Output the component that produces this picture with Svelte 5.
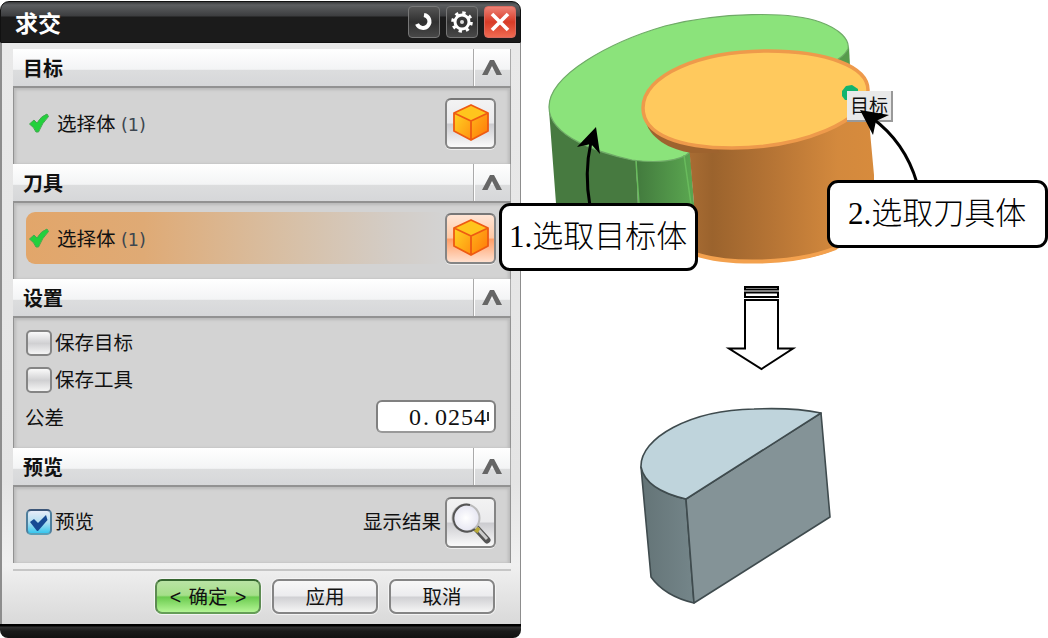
<script lang="ts">
  let keepTarget = $state(false);
  let keepTool = $state(false);
  let preview = $state(true);
  let closed = $state<Record<string, boolean>>({});

  function toggle(name: string) {
    closed[name] = !closed[name];
  }
</script>

{#snippet header(title: string)}
  <header class="section-head">
    <h2>{title}</h2>
    <button class="fold" aria-label={title} onclick={() => toggle(title)}>
      <svg width="20" height="15" viewBox="0 0 20 15">
        <path d="M0 15 L8 0 H12 L20 15 H14.500 L10 6 L5.500 15 Z" fill="#666" />
      </svg>
    </button>
  </header>
{/snippet}

{#snippet cube()}
  <svg width="38" height="38" viewBox="0 0 38 38">
    <path d="M2 9 L19 1 L36 9 V27 L19 36 L2 27 Z" fill="#ff9d12" />
    <path d="M2 9 L19 1 L36 9 L19 17 Z" fill="#ffc51d" />
    <path d="M2 9 L19 17 V36 L2 27 Z" fill="url(#cube-left)" />
    <path d="M36 9 L19 17 V36 L36 27 Z" fill="url(#cube-right)" />
    <path d="M2 9 L19 1 L36 9 V27 L19 36 L2 27 Z M2 9 L19 17 L36 9 M19 17 V36" fill="none" stroke="#ee5a12" stroke-width="1.8" stroke-linejoin="round" />
  </svg>
{/snippet}

{#snippet tick()}
  <svg class="tick" width="20" height="20" viewBox="0 0 20 20">
    <path d="M0.500 11 L5 7 L8 10 Q12 3 18 1 L19.500 3.500 Q13 10 9.500 19 H7 Q5 14 0.500 11 Z" fill="#22d13c" stroke="#45a850" stroke-width="1" />
  </svg>
{/snippet}

<main class="page">
  <svg class="defs" width="0" height="0">
    <defs>
      <linearGradient id="cube-left" x1="0" y1="0" x2="1" y2="1">
        <stop offset="0" stop-color="#ffd323" />
        <stop offset="1" stop-color="#ff9210" />
      </linearGradient>
      <linearGradient id="cube-right" x1="0" y1="0" x2="1" y2="1">
        <stop offset="0" stop-color="#ffb61a" />
        <stop offset="1" stop-color="#ff7608" />
      </linearGradient>
    </defs>
  </svg>

  <section class="dialog">
    <div class="titlebar">
      <h1>求交</h1>
      <button class="tool" aria-label="重置">
        <svg width="30" height="30" viewBox="0 0 30 30">
          <path d="M15 8 A6.500 6.500 0 1 1 8 17" fill="none" stroke="#fff" stroke-width="4" />
        </svg>
      </button>
      <button class="tool" aria-label="选项">
        <svg width="30" height="30" viewBox="0 0 30 30">
          <circle cx="15" cy="15" r="9.300" fill="none" stroke="#fff" stroke-width="3" stroke-dasharray="3.300 4" />
          <circle cx="15" cy="15" r="7" fill="none" stroke="#fff" stroke-width="3" />
          <circle cx="15" cy="15" r="2" fill="#ddd" />
        </svg>
      </button>
      <button class="tool close" aria-label="关闭">
        <svg width="30" height="30" viewBox="0 0 30 30">
          <path d="M7 7 L23 23 M23 7 L7 23" stroke="#fff" stroke-width="3.600" />
        </svg>
      </button>
    </div>

    <div class="content">
      {@render header('目标')}
      {#if !closed['目标']}
        <div class="body pick">
          <div class="pick-row">
            {@render tick()}
            <span>选择体 <em>(1)</em></span>
          </div>
          <button class="square" aria-label="体">{@render cube()}</button>
        </div>
      {/if}

      {@render header('刀具')}
      {#if !closed['刀具']}
        <div class="body pick">
          <div class="pick-row active">
            {@render tick()}
            <span>选择体 <em>(1)</em></span>
          </div>
          <button class="square hot" aria-label="体">{@render cube()}</button>
        </div>
      {/if}

      {@render header('设置')}
      {#if !closed['设置']}
        <div class="body settings">
          <label><input type="checkbox" bind:checked={keepTarget} /><i class="box"></i>保存目标</label>
          <label><input type="checkbox" bind:checked={keepTool} /><i class="box"></i>保存工具</label>
          <div class="tolerance">
            <span>公差</span>
            <div class="field"><span>0</span><span class="point">.</span><span>0254</span><i class="more"></i></div>
          </div>
        </div>
      {/if}

      {@render header('预览')}
      {#if !closed['预览']}
        <div class="body preview">
          <label>
            <input type="checkbox" bind:checked={preview} />
            <i class="box" class:on={preview}>
              {#if preview}
                <svg width="22" height="22" viewBox="0 0 22 22">
                  <path d="M2 11 L6 8 L10 12 L18 4 L19.500 9 L10 20 H9 Z" fill="#164a94" />
                </svg>
              {/if}
            </i>预览
          </label>
          <span class="result">显示结果</span>
          <button class="square" aria-label="显示结果">
            <svg width="44" height="44" viewBox="0 0 44 44">
              <path d="M28 29 L38 40" stroke="#555" stroke-width="7" stroke-linecap="round" />
              <path d="M28 28 L38 39" stroke="#ccc" stroke-width="3" />
              <path d="M25 28 L30 31" stroke="#b8a936" stroke-width="5" />
              <circle cx="17" cy="18" r="13.5" fill="url(#lens)" stroke="#bbb" stroke-width="2" />
              <path d="M21 5 A13.5 13.5 0 1 0 26 29" fill="none" stroke="#555" stroke-width="2" />
              <defs>
                <radialGradient id="lens">
                  <stop offset="0" stop-color="#fff" />
                  <stop offset="1" stop-color="#e6e6f2" />
                </radialGradient>
              </defs>
            </svg>
          </button>
        </div>
      {/if}

      <footer>
        <button class="btn ok">&lt; 确定 &gt;</button>
        <button class="btn">应用</button>
        <button class="btn">取消</button>
      </footer>
    </div>
    <div class="base"></div>
  </section>

  <svg class="scene" width="527" height="638" viewBox="521 0 527 638">
    <defs>
      <linearGradient id="wood" gradientUnits="userSpaceOnUse" x1="690" y1="0" x2="874" y2="0">
        <stop offset="0" stop-color="#a86c33" />
        <stop offset="0.12" stop-color="#9b632d" />
        <stop offset="0.5" stop-color="#ba7736" />
        <stop offset="0.8" stop-color="#d3893d" />
        <stop offset="1" stop-color="#d78b3d" />
      </linearGradient>
      <linearGradient id="moss" gradientUnits="userSpaceOnUse" x1="635" y1="0" x2="692" y2="0">
        <stop offset="0" stop-color="#42793d" />
        <stop offset="1" stop-color="#5aa650" />
      </linearGradient>
      <linearGradient id="slate" gradientUnits="userSpaceOnUse" x1="642" y1="0" x2="693" y2="0">
        <stop offset="0" stop-color="#647477" />
        <stop offset="1" stop-color="#748589" />
      </linearGradient>
    </defs>

    <!-- target body -->
    <path d="M830 60 L849 47 L850 66 L840 70 Z" fill="#569c4c" />
    <path d="M549 110 C562 138 600 153 636 160 L639 230 H558 Z" fill="#477a40" />
    <path d="M636 155 L690 150 L696 230 H639 Z" fill="url(#moss)" />
    <path d="M549 107 C549 75 610 42 665 26 C720 12 790 11 820 22 C840 29 850 40 848 49 C842 60 830 65 800 70 L700 120 L690 152 C680 162 655 163 632 160 C600 153 549 137 549 107 Z" fill="#8be37b" stroke="#6faa67" stroke-width="1.2" />
    <path d="M636 161 L639 204 M684 155 L691 204" stroke="#69bb5d" stroke-width="1.5" fill="none" />

    <!-- tool body -->
    <path d="M689 145 L866 88 L874 175 V215 C860 250 810 262 760 262 C730 262 705 259 690 254 L694 204 Z" fill="url(#wood)" />
    <path d="M695 254 C725 264 790 266 836 248" fill="none" stroke="#f3a14e" stroke-width="4" />
    <path d="M645 118 C648 138 670 150 692 153 H720 L700 130 Z" fill="#9e632e" />
    <path d="M643 108 C643 75 700 51 768 51 C825 51 868 66 868 90 C868 121 801 148 732 148 C680 148 643 135 643 108 Z" fill="#ffc95d" stroke="#ee9a4b" stroke-width="3.5" />
    <path d="M842 91 L846 86 L852 85 L858 89 V100 H845 L842 96 Z" fill="#12b46f" />

    <!-- result body -->
    <g stroke="#3f4b4e" stroke-width="1.6" stroke-linejoin="round">
      <path d="M641 467 C646 482 662 494 686 499 L694 603 C677 599 661 591 651 577 Z" fill="url(#slate)" />
      <path d="M686 499 L821 413 L830 517 L694 603 Z" fill="#849397" />
      <path d="M641 467 C640 438 690 410 754 409 C778 408 802 409 821 413 L686 499 C660 493 644 482 641 467 Z" fill="#bfd4dc" />
    </g>

    <!-- step arrow -->
    <g fill="#fff" stroke="#000" stroke-width="2">
      <path d="M745 287 H778 V289.500 H745 Z M745 292.500 H778 V297 H745 Z" />
      <path d="M745 300 H778 V348.500 H793 L761.500 369 L729 348.500 H745 Z" />
    </g>
  </svg>

  <span class="tag">目标</span>

  <svg class="pointers" width="1048" height="638" viewBox="0 0 1048 638">
    <path d="M590 206 Q584 173 591 142" fill="none" stroke="#000" stroke-width="3" />
    <path d="M596 127 L600 154 L591 144 L577 147 Z" />
    <path d="M917 183 Q905 142 872 118" fill="none" stroke="#000" stroke-width="3" />
    <path d="M860 110 L889 115 L876 121 L873 135 Z" />
  </svg>
  <div class="callout first">1.选取目标体</div>
  <div class="callout second">2.选取刀具体</div>
</main>

<style>
  :global(body) {
    margin: 0;
    background: #fff;
  }

  .page {
    position: relative;
    display: grid;
    grid-template-columns: 521px 527px;
    width: 1048px;
    height: 638px;
    overflow: hidden;
    color: #111;
    font-family: "Liberation Sans", "Noto Sans CJK SC", sans-serif;
    font-size: 19.5px;
  }

  .page * {
    box-sizing: border-box;
  }

  .defs {
    position: absolute;
  }

  button {
    padding: 0;
    font: inherit;
    color: inherit;
  }

  svg {
    display: block;
  }

  .scene {
    grid-column: 2;
    grid-row: 1;
  }

  /* Dialog frame */
  .dialog {
    grid-column: 1;
    grid-row: 1;
    display: flex;
    flex-direction: column;
    height: 638px;
    padding-top: 1px;
  }

  .titlebar {
    display: flex;
    align-items: center;
    gap: 6px;
    height: 42px;
    padding: 0 4px 0 14px;
    background: linear-gradient(#3a3b3d 0, #5c5e60 3px, #3c3d3f 14px, #1b1b1b 15px);
    border: 1px solid #111;
    border-radius: 9px 9px 0 0;
  }

  h1 {
    flex: 1;
    margin: 0;
    padding-top: 4px;
    color: #fff;
    font-size: 23px;
    line-height: 30px;
  }

  .tool {
    display: grid;
    place-items: center;
    width: 32px;
    height: 32px;
    background: linear-gradient(#555, #303030 50%, #484848);
    border: 1px solid #777;
    border-radius: 4px;
  }

  .close {
    background: linear-gradient(#ee8175, #d83b27 50%, #ef6a51);
    border-color: #d86a60;
  }

  .content {
    flex: 1;
    padding: 6px 9px 0 11px;
    background: linear-gradient(#e9e9e9, #e4e4e4 75%, #f0f0f0 90%, #d9d9d9);
    border: solid #8d8d8d;
    border-width: 0 1px 0 2px;
  }

  .base {
    height: 14px;
    background: linear-gradient(#000 2px, #333 3px, #1a1a1a 7px, #111);
    border-radius: 0 0 8px 8px;
  }

  /* Sections */
  .section-head {
    display: flex;
    height: 37px;
    background: linear-gradient(#fff, #f3f4f5 55%, #dcddde 57%, #d6d7d9);
    border-right: 1px solid #aaa;
  }

  h2 {
    flex: 1;
    margin: 0;
    padding: 2px 0 0 10px;
    font-size: 20px;
    line-height: 36px;
  }

  .fold {
    display: grid;
    place-items: center;
    width: 37px;
    background: none;
    border: none;
    border-left: 1px solid #aaa;
    box-shadow: inset 1px 0 0 #fff;
  }

  .body {
    background: #d3d3d3;
    border: solid #929292;
    border-width: 2px 1px 0 1px;
    box-shadow: inset 2px 2px 3px #bbb, inset -2px 0 3px #bbb;
  }

  .pick {
    display: flex;
    align-items: center;
    height: 78px;
    padding: 0 14px 6px 12px;
  }

  .pick-row {
    flex: 1;
    display: flex;
    align-items: center;
    gap: 8px;
    height: 52px;
    padding-left: 3px;
    border-radius: 9px;
  }

  .pick-row span {
    padding-bottom: 2px;
  }

  .active {
    background: linear-gradient(90deg, #e2a66a 0, #dfaa75 28%, #d8bea2 60%, #d3cdc7 88%, #d3d3d3);
  }

  .pick-row em {
    font: 17.5px "DejaVu Sans", sans-serif;
    color: #3d4650;
  }

  .square {
    display: grid;
    place-items: center;
    width: 51px;
    height: 51px;
    background: linear-gradient(#f3f3f3, #eaeaec 48%, #ccccd0 52%, #fafafa);
    border: 2px solid #858585;
    border-top-color: #777;
    border-radius: 6px;
    box-shadow: 0 1px 0 #eee;
  }

  .hot {
    background: linear-gradient(#ffe5d5, #ffc9a5 48%, #ff9f68 52%, #ffe0ce);
  }

  .settings {
    height: 132px;
    padding: 7px 14px 0 12px;
  }

  label {
    display: flex;
    align-items: center;
    gap: 3px;
    height: 36.5px;
    line-height: 32px;
  }

  label input {
    display: none;
  }

  .box {
    width: 26px;
    height: 26px;
    background: linear-gradient(#fafafa, #d0d0d2 52%, #f5f5f5);
    border: 2px solid #858585;
    border-radius: 5px;
  }

  .box.on {
    background: linear-gradient(#e6ecf8, #b5dff1 50%, #36c7ef);
    border-color: #3c5678 #4f7f9d #5ba0b8;
  }

  .tolerance {
    display: flex;
    justify-content: space-between;
    align-items: center;
    height: 37px;
  }

  .tolerance > span {
    margin-left: -1px;
  }

  .field {
    display: flex;
    align-items: center;
    width: 120px;
    height: 33px;
    padding-left: 31px;
    background: #fff;
    border: 2px solid #808080;
    border-bottom-color: #999;
    border-radius: 6px;
    font: 24px/30px "Liberation Serif", serif;
    letter-spacing: 1px;
    white-space: nowrap;
  }

  .point {
    width: 13px;
    padding-left: 1px;
  }

  /* first sliver of the digits that run past the field */
  .more {
    width: 2px;
    height: 9px;
    background: #333;
  }

  .preview {
    display: flex;
    align-items: center;
    height: 78px;
    padding: 0 14px 6px 12px;
  }

  .preview label {
    padding-bottom: 0;
  }

  .result {
    margin: 0 4px 3px auto;
  }

  /* Footer */
  footer {
    display: flex;
    justify-content: flex-end;
    gap: 11px;
    margin-top: 6px;
    padding: 8px 16px 0 0;
    border-top: 2px solid #c6c6c6;
  }

  .btn {
    width: 106px;
    height: 35px;
    background: linear-gradient(#f8f8f8, #ececee 48%, #d0d0d3 52%, #f5f5f5);
    border: 2px solid #858585;
    border-radius: 7px;
    box-shadow: 0 0 0 1px #f4f4f4;
    line-height: 30px;
  }

  .ok {
    background: linear-gradient(#b9e3a4, #a5df89 46%, #6bcb4f 52%, #b4f595);
    border-color: #35652f #5d8b52 #659d57;
    word-spacing: 2px;
  }

  /* Annotations */
  .tag {
    position: absolute;
    left: 847px;
    top: 91px;
    width: 46px;
    height: 31px;
    background: #e9e9e9;
    border: solid #999;
    border-width: 0 2px 2px 0;
    font-size: 19px;
    line-height: 31px;
    text-align: center;
  }

  .pointers {
    position: absolute;
    left: 0;
    top: 0;
    pointer-events: none;
  }

  .callout {
    position: absolute;
    height: 68px;
    background: #fff;
    border: 3px solid #000;
    border-radius: 11px;
    color: #000;
    font: 300 31px/62px "Liberation Serif", "Noto Sans CJK SC", serif;
    white-space: nowrap;
  }

  .first {
    left: 499px;
    top: 203px;
    width: 199px;
    padding-left: 7px;
  }

  .second {
    left: 827px;
    top: 180px;
    width: 221px;
    padding-left: 18px;
  }
</style>
